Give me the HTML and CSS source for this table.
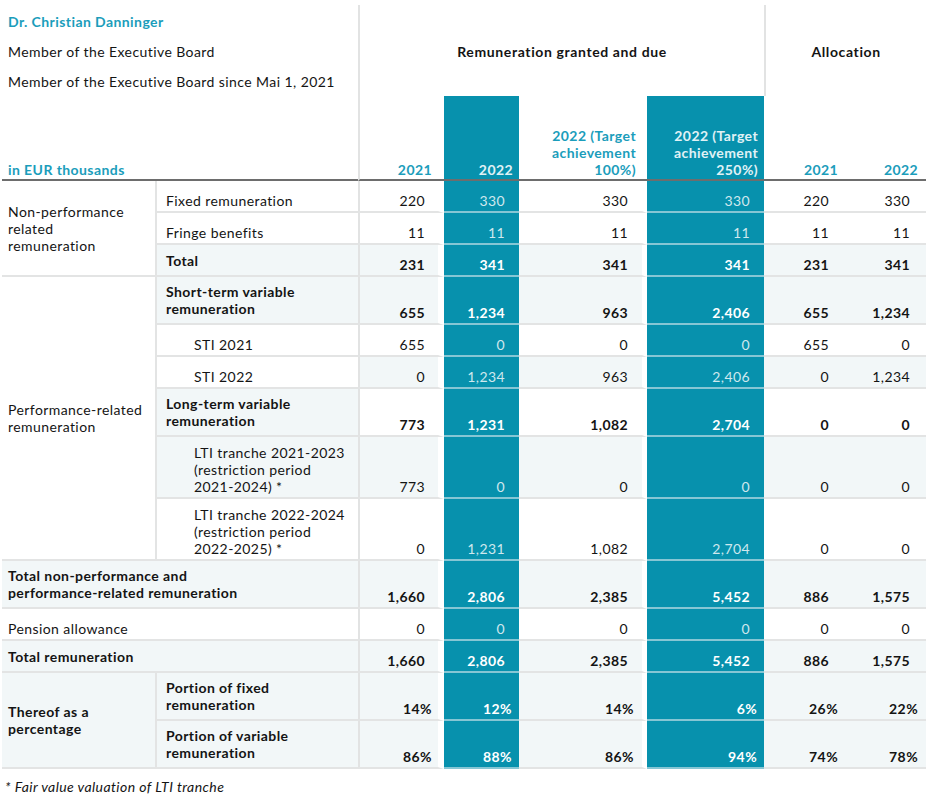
FILE: index.html
```html
<!DOCTYPE html>
<html lang="en">
<head>
<meta charset="utf-8">
<title>Remuneration – Dr. Christian Danninger</title>
<link rel="stylesheet" href="styles.css">
</head>
<body>
<div class="wrap">
<table class="rem">
  <colgroup>
    <col class="w-a"><col class="w-b"><col class="w-c"><col class="w-d"><col class="w-e"><col class="w-f"><col class="w-g"><col class="w-h">
  </colgroup>
  <thead>
    <tr class="h1">
      <th class="hleft" colspan="2" rowspan="2">
        <div class="hbox">
          <div class="hline hname">Dr. Christian Danninger</div>
          <div class="hline">Member of the Executive Board</div>
          <div class="hline">Member of the Executive Board since Mai 1, 2021</div>
          <div class="hunit">in EUR thousands</div>
        </div>
      </th>
      <th class="hgroup vl" colspan="4">Remuneration granted and due</th>
      <th class="hgroup vl" colspan="2">Allocation</th>
    </tr>
    <tr class="h2">
      <th class="yr c vl">2021</th>
      <th class="yr d teal">2022</th>
      <th class="yr e">2022 (Target<br>achievement<br>100%)</th>
      <th class="yr f teal">2022 (Target<br>achievement<br>250%)</th>
      <th class="yr g">2021</th>
      <th class="yr h">2022</th>
    </tr>
  </thead>
  <tbody>
    <tr>
      <td class="cat" rowspan="3">Non-performance<br>related<br>remuneration</td>
      <td class="lbl">Fixed remuneration</td>
      <td class="num c vl">220</td><td class="num d teal">330</td><td class="num e">330</td><td class="num f teal">330</td><td class="num g">220</td><td class="num h">330</td>
    </tr>
    <tr>
      <td class="lbl">Fringe benefits</td>
      <td class="num c vl">11</td><td class="num d teal">11</td><td class="num e">11</td><td class="num f teal">11</td><td class="num g">11</td><td class="num h">11</td>
    </tr>
    <tr class="lt bold">
      <td class="lbl">Total</td>
      <td class="num c vl">231</td><td class="num d teal">341</td><td class="num e">341</td><td class="num f teal">341</td><td class="num g">231</td><td class="num h">341</td>
    </tr>
    <tr class="lt bold">
      <td class="cat plain" rowspan="6">Performance-related<br>remuneration</td>
      <td class="lbl">Short-term variable<br>remuneration</td>
      <td class="num c vl">655</td><td class="num d teal">1,234</td><td class="num e">963</td><td class="num f teal">2,406</td><td class="num g">655</td><td class="num h">1,234</td>
    </tr>
    <tr>
      <td class="lbl ind">STI 2021</td>
      <td class="num c vl">655</td><td class="num d teal">0</td><td class="num e">0</td><td class="num f teal">0</td><td class="num g">655</td><td class="num h">0</td>
    </tr>
    <tr class="ltv">
      <td class="lbl ind">STI 2022</td>
      <td class="num c vl">0</td><td class="num d teal">1,234</td><td class="num e">963</td><td class="num f teal">2,406</td><td class="num g">0</td><td class="num h">1,234</td>
    </tr>
    <tr class="bold">
      <td class="lbl ltl">Long-term variable<br>remuneration</td>
      <td class="num c vl">773</td><td class="num d teal">1,231</td><td class="num e">1,082</td><td class="num f teal">2,704</td><td class="num g">0</td><td class="num h">0</td>
    </tr>
    <tr class="lt">
      <td class="lbl ind">LTI tranche 2021-2023<br>(restriction period<br>2021-2024) *</td>
      <td class="num c vl">773</td><td class="num d teal">0</td><td class="num e">0</td><td class="num f teal">0</td><td class="num g">0</td><td class="num h">0</td>
    </tr>
    <tr>
      <td class="lbl ind">LTI tranche 2022-2024<br>(restriction period<br>2022-2025) *</td>
      <td class="num c vl">0</td><td class="num d teal">1,231</td><td class="num e">1,082</td><td class="num f teal">2,704</td><td class="num g">0</td><td class="num h">0</td>
    </tr>
    <tr class="lt bold">
      <td class="full" colspan="2">Total non-performance and<br>performance-related remuneration</td>
      <td class="num c vl">1,660</td><td class="num d teal">2,806</td><td class="num e">2,385</td><td class="num f teal">5,452</td><td class="num g">886</td><td class="num h">1,575</td>
    </tr>
    <tr>
      <td class="full" colspan="2">Pension allowance</td>
      <td class="num c vl">0</td><td class="num d teal">0</td><td class="num e">0</td><td class="num f teal">0</td><td class="num g">0</td><td class="num h">0</td>
    </tr>
    <tr class="lt bold">
      <td class="full" colspan="2">Total remuneration</td>
      <td class="num c vl">1,660</td><td class="num d teal">2,806</td><td class="num e">2,385</td><td class="num f teal">5,452</td><td class="num g">886</td><td class="num h">1,575</td>
    </tr>
    <tr class="lt bold">
      <td class="cat" rowspan="2">Thereof as a<br>percentage</td>
      <td class="lbl">Portion of fixed<br>remuneration</td>
      <td class="num pct c vl">14%</td><td class="num pct d teal">12%</td><td class="num pct e">14%</td><td class="num pct f teal">6%</td><td class="num pct g">26%</td><td class="num pct h">22%</td>
    </tr>
    <tr class="lt bold">
      <td class="lbl">Portion of variable<br>remuneration</td>
      <td class="num pct c vl">86%</td><td class="num pct d teal">88%</td><td class="num pct e">86%</td><td class="num pct f teal">94%</td><td class="num pct g">74%</td><td class="num pct h">78%</td>
    </tr>
  </tbody>
</table>
<p class="note">* Fair value valuation of LTI tranche</p>
</div>
</body>
</html>
```
FILE: styles.css
```css
body {
  margin: 0;
  background: #ffffff;
  color: #141414;
  font-family: Lato, "Noto Sans", sans-serif;
  font-size: 14px;
  letter-spacing: 0.42px;
}

.wrap {
  padding: 5px 0 0 2px;
}

.rem {
  border-collapse: separate;
  border-spacing: 0;
  table-layout: fixed;
  width: 924px;
}

.w-a { width: 153px; }
.w-b { width: 203px; }
.w-c { width: 86px; }
.w-d { width: 75px; }
.w-e { width: 128px; }
.w-f { width: 117px; }
.w-g { width: 81px; }
.w-h { width: 81px; }

th, td {
  padding: 0;
  font-weight: normal;
  line-height: 17px;
}

/* ---------- header ---------- */
.h1 { height: 91px; }
.h2 { height: 85px; }

.hleft {
  text-align: left;
  vertical-align: top;
  border-bottom: 2px solid #6d6d6d;
}

.hbox {
  display: flex;
  flex-direction: column;
  height: 174px;
  padding: 2px 0 0 6px;
  box-sizing: border-box;
}

.hline {
  height: 30px;
  line-height: 30px;
}

.hname {
  color: #1b9dbb;
  font-weight: 700;
}

.hunit {
  margin-top: auto;
  color: #1b9dbb;
  font-weight: 700;
  line-height: 17px;
  padding-bottom: 1px;
}

.hgroup {
  font-weight: 700;
  text-align: center;
  vertical-align: middle;
  padding-top: 1px;
  letter-spacing: 0.62px;
}

.vl {
  border-left: 2px solid #e2e3e3;
}

.yr {
  color: #1b9dbb;
  font-weight: 700;
  text-align: right;
  vertical-align: bottom;
  line-height: 17px;
  padding: 0 6px 1px 0;
  border-bottom: 2px solid #6d6d6d;
}

.yr.c { padding-right: 12px; }
.yr.e { padding-right: 11px; }
.yr.g { padding-right: 7px; }
.yr.h { padding-right: 8px; }

.yr.teal {
  color: #e0f2f6;
}

/* ---------- body ---------- */
tbody tr { height: 32px; }

tbody td {
  vertical-align: bottom;
  padding: 7px 6px 2px 6px;
  border-bottom: 2px solid #e3e4e4;
}

.bold td.lbl, .bold td.full {
  padding-top: 6px;
  padding-bottom: 6px;
}

.cat {
  background: #ffffff;
}

tbody td.cat {
  vertical-align: middle;
  padding: 4px 6px;
}

.lbl {
  border-left: 2px solid #e3e4e4;
}

tbody td.lbl { padding-left: 9px; }
tbody td.lbl.ind { padding-left: 37px; }

tbody td.full {
  padding-left: 6px;
}

tbody td.num {
  text-align: right;
  vertical-align: bottom;
  padding: 0 14px 2px 0;
}

tbody td.num.c { padding-right: 13px; border-right: 6px solid #ffffff; }
tbody td.num.e { padding-right: 14px; border-right: 5px solid #ffffff; }
tbody td.num.g, tbody td.num.h { padding-right: 16px; }

tbody td.num.pct { padding-right: 7px; }
tbody td.num.pct.c { padding-right: 6px; }
tbody td.num.pct.e { padding-right: 8px; }
tbody td.num.pct.h { padding-right: 8px; }

.bold td { font-weight: 700; }
.bold td.cat.plain { font-weight: 400; }

.lt td { background: #f2f7f8; }
.lt td.cat.plain { background: #ffffff; }
.ltv td.num { background: #f2f7f8; }
.ltl { background: #f2f7f8; }
.lt .cat { background: #f2f7f8; }

td.teal, .lt td.teal, .ltv td.teal {
  background: #0791ad;
  color: #cfe8ee;
  border-bottom: 2px solid #86c6d4;
}

.bold td.teal {
  color: #ffffff;
}

th.teal {
  background: #0791ad;
}

.note {
  margin: 9px 0 0 3px;
  font-style: italic;
  line-height: 17px;
}
```
